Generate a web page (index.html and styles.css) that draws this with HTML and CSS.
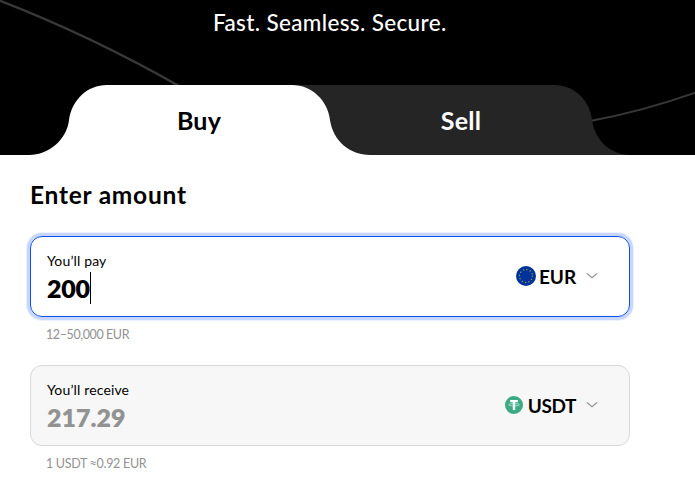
FILE: index.html
```html
<!DOCTYPE html>
<html lang="en">
<head>
<meta charset="utf-8">
<title>Buy crypto</title>
<link rel="stylesheet" href="styles.css">
</head>
<body>
<header class="hero">
  <svg class="backdrop" viewBox="0 0 695 155" aria-hidden="true">
    <path class="line" d="M-2 0Q89 35 179 86"/>
    <path class="line thin" d="M590 121Q644 111 697 92"/>
    <path class="tab-sell" d="M280 155V85H554C574 85 590 100 592 120C595 141 611 155 631 155Z"/>
    <path class="tab-buy" d="M29 155C49 155 67 139 69 120C72 100 87 85 107 85H292C312 85 328 101 330 120C333 141 350 155 370 155Z"/>
  </svg>
  <p class="tagline"><span>Fast. Seamless. Secure.</span></p>
  <nav class="tabs">
    <a class="tab active"><span>Buy</span></a>
    <a class="tab"><span>Sell</span></a>
  </nav>
</header>
<main class="form">
  <h1><span>Enter amount</span></h1>
  <section class="field focused">
    <div class="entry">
      <label class="pay">You’ll pay</label>
      <div class="value"><span>200</span><i class="caret"></i></div>
    </div>
    <div class="currency">
      <svg class="coin eu" viewBox="0 0 20 20"><circle cx="10" cy="10" r="10" fill="#003399"/><circle cx="10" cy="10" r="6.5" fill="none" stroke="#a09a50" stroke-width="1.25" stroke-linecap="round" stroke-dasharray=".3 3.103"/></svg>
      <span class="code eur">EUR</span>
      <svg class="chevron" viewBox="0 0 12 8"><path d="M1 1.5L6 5.7L11 1.5"/></svg>
    </div>
  </section>
  <p class="hint range">12–50,000 EUR</p>
  <section class="field quote">
    <div class="entry">
      <label class="receive">You’ll receive</label>
      <div class="value result"><span>217.29</span></div>
    </div>
    <div class="currency">
      <svg class="coin" viewBox="0 0 18 18"><circle cx="9" cy="9" r="9" fill="#3caa83"/><path fill="#fff" d="M5.2 4.1h7.6v2.2h-2.6v7.6H7.8V6.3H5.2z"/><ellipse cx="9" cy="8.8" rx="5.4" ry="1.2" fill="none" stroke="#d8eee6" stroke-width=".65"/></svg>
      <span class="code usdt">USDT</span>
      <svg class="chevron" viewBox="0 0 12 8"><path d="M1 1.5L6 5.7L11 1.5"/></svg>
    </div>
  </section>
  <p class="hint rate">1 USDT ≈0.92 EUR</p>
</main>
</body>
</html>
```
FILE: styles.css
```css
* { box-sizing: border-box; }
body { margin: 0; background: #fff; color: #000; font-family: Lato, "Liberation Sans", sans-serif; }
p, h1 { margin: 0; }
.hero { position: relative; height: 155px; background: #000; overflow: hidden; }
.backdrop { position: absolute; inset: 0; width: 695px; height: 155px; }
.line { fill: none; stroke: #383838; stroke-width: 2.4; }
.thin { stroke-width: 2; }
.tab-sell { fill: #252525; }
.tab-buy { fill: #fff; }
.tagline { position: relative; height: 85px; padding: 9px 0 0 213px; color: #fff; font-size: 22.5px; line-height: 28px; font-weight: 500; letter-spacing: .35px; white-space: nowrap; }
.tabs { position: relative; display: flex; width: 524px; height: 70px; margin-left: 68px; }
.tab { flex: 1; display: flex; align-items: center; justify-content: center; color: #fff; font-size: 25px; font-weight: 700; letter-spacing: .2px; }
.tab.active { color: #000; }
.form { padding: 25px 65px 0 30px; }
h1 { height: 56px; font-size: 24.5px; line-height: 30px; font-weight: 700; letter-spacing: .75px; }
.field { display: flex; justify-content: space-between; width: 600px; height: 81px; padding: 0 31px 0 16px; border: 1px solid #d9d9d9; border-radius: 12px; }
.focused { border-color: #0b50ee; box-shadow: 0 0 0 3px #c7d6fa, 0 0 0 4px #edf2fe; }
.quote { background: #f7f7f7; }
.entry { padding-top: 14px; }
label { display: block; height: 20px; font-size: 14px; line-height: 20px; letter-spacing: .15px; }
.value { display: flex; align-items: center; height: 33px; font-size: 25px; font-weight: 800; line-height: 33px; letter-spacing: -.3px; }
.value span { padding-top: 1px; }
.caret { width: 1px; height: 32px; background: #000; }
.result { color: #929292; letter-spacing: 0; }
.currency { display: flex; align-items: center; padding-bottom: 1px; }
.coin { width: 18px; height: 18px; margin-right: 5px; }
.eu { width: 20px; height: 20px; margin-right: 3px; }
.code { padding-top: 1px; font-size: 19px; line-height: 24px; font-weight: 700; }
.usdt { letter-spacing: -.4px; }
.eur { letter-spacing: -.1px; }
.chevron { width: 12px; height: 8px; margin-left: 10px; fill: none; stroke: #929292; stroke-width: 1.1; }
.hint { height: 48px; padding: 8px 0 0 16px; color: #929292; font-size: 12.5px; line-height: 20px; letter-spacing: -.4px; }
.rate { letter-spacing: -.3px; }
```
